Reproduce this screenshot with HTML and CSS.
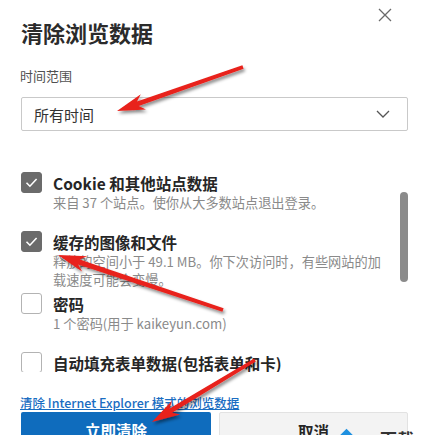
FILE: index.html
```html
<!DOCTYPE html>
<html lang="zh-CN">
<head>
<meta charset="utf-8">
<title>清除浏览数据</title>
<link rel="stylesheet" href="styles.css">
</head>
<body>
<div class="dialog">
  <div class="header">
    <h1 class="title">清除浏览数据</h1>
    <span class="close">
      <svg width="14" height="14" viewBox="0 0 14 14"><path d="M1 1 L13 13 M13 1 L1 13" stroke="#6a6a6a" stroke-width="1.3" fill="none"/></svg>
    </span>
  </div>
  <div class="label">时间范围</div>
  <div class="select">
    <span class="select-text">所有时间</span>
    <svg class="chevron" width="14" height="8" viewBox="0 0 14 8"><path d="M1 1 L7 7 L13 1" stroke="#555" stroke-width="1.3" fill="none"/></svg>
  </div>
  <div class="scroll">
    <div class="item">
      <span class="box checked"><svg width="21" height="21" viewBox="0 0 21 21"><path d="M5.5 10.8 L8.9 14.2 L15.6 7" stroke="#fff" stroke-width="1.6" fill="none"/></svg></span>
      <div class="text">
        <div class="item-title">Cookie 和其他站点数据</div>
        <div class="item-sub">来自 37 个站点。使你从大多数站点退出登录。</div>
      </div>
    </div>
    <div class="item tall">
      <span class="box checked"><svg width="21" height="21" viewBox="0 0 21 21"><path d="M5.5 10.8 L8.9 14.2 L15.6 7" stroke="#fff" stroke-width="1.6" fill="none"/></svg></span>
      <div class="text">
        <div class="item-title">缓存的图像和文件</div>
        <div class="item-sub">释放的空间小于 49.1 MB。你下次访问时，有些网站的加<br>载速度可能会变慢。</div>
      </div>
    </div>
    <div class="item">
      <span class="box"></span>
      <div class="text">
        <div class="item-title">密码</div>
        <div class="item-sub">1 个密码(用于 kaikeyun.com)</div>
      </div>
    </div>
    <div class="item">
      <span class="box"></span>
      <div class="text">
        <div class="item-title">自动填充表单数据(包括表单和卡)</div>
      </div>
    </div>
    <div class="thumb"></div>
  </div>
  <a class="link" href="#">清除 Internet Explorer 模式的浏览数据</a>
  <div class="buttons">
    <div class="btn primary">立即清除</div>
    <div class="btn secondary">取消</div>
  </div>
</div>
<div class="peek">
  <span class="diamond"></span>
  <span class="peek-text">下载</span>
</div>
<svg class="arrows" width="434" height="435" viewBox="0 0 434 435">
  <defs>
    <filter id="sh" x="-20%" y="-20%" width="140%" height="140%">
      <feDropShadow dx="1.5" dy="2.5" stdDeviation="1.6" flood-color="#000" flood-opacity="0.45"/>
    </filter>
  </defs>
  <g fill="#e8201a" filter="url(#sh)">
    <polygon points="242.4,65.3 137.0,101.4 140.8,94.2 117,111 146.0,109.4 138.6,106.1 243.6,68.7"/>
    <polygon points="223.6,308.3 79.7,259.6 87.1,256.3 58,255 82.1,271.5 78.1,264.4 222.4,311.7"/>
    <polygon points="254.1,358.5 169.6,408.5 171.9,400.7 152,422 180.1,414.4 172.1,412.8 255.9,361.5"/>
  </g>
</svg>
</body>
</html>
```

FILE: styles.css
```css
html, body {
  margin: 0;
  padding: 0;
  background: #fff;
}
body {
  width: 434px;
  height: 435px;
  overflow: hidden;
  position: relative;
  font-family: "Noto Sans CJK SC", "Noto Sans", sans-serif;
  color: #262626;
}
.dialog {
  padding: 0 26px 0 21px;
  display: flex;
  flex-direction: column;
}
.header {
  display: flex;
  justify-content: space-between;
  align-items: flex-start;
  padding-top: 17px;
}
.title {
  margin: 0;
  font-size: 22px;
  line-height: 30px;
  font-weight: 600;
  color: #2b2b2b;
}
.close {
  margin-top: -9px;
  margin-right: 16px;
  width: 14px;
  height: 14px;
  display: block;
}
.close svg { display: block; }
.label {
  margin-top: 20px;
  font-size: 13px;
  line-height: 18px;
  color: #505050;
  margin-left: -1px;
}
.select {
  margin-top: 12px;
  height: 34px;
  box-sizing: border-box;
  border: 1px solid #c9c9c9;
  border-radius: 2px;
  display: flex;
  align-items: center;
  justify-content: space-between;
  padding: 0 17px 0 12px;
}
.select-text {
  font-size: 15px;
  color: #333;
}
.chevron { display: block; }
.scroll {
  margin-top: 14px;
  height: 227px;
  box-sizing: border-box;
  padding-top: 27px;
  overflow: hidden;
  position: relative;
}
.item {
  display: flex;
  gap: 11px;
  height: 59px;
  flex-shrink: 0;
}
.item.tall { height: 62px; }
.box {
  width: 21px;
  height: 21px;
  box-sizing: border-box;
  border: 1px solid #b3b3b3;
  border-radius: 3px;
  flex-shrink: 0;
  display: block;
  background: #fff;
}
.box.checked {
  background: #6b6b6b;
  border-color: #6b6b6b;
}
.box svg {
  display: block;
  margin: -1px;
}
.text { display: flex; flex-direction: column; }
.item-title {
  font-size: 15.5px;
  line-height: 22px;
  font-weight: 600;
  color: #262626;
  white-space: nowrap;
}
.item-sub {
  font-size: 13.2px;
  line-height: 18px;
  color: #8a8a8a;
  white-space: nowrap;
}
.thumb {
  position: absolute;
  right: 0;
  top: 47px;
  width: 8px;
  height: 90px;
  border-radius: 4px;
  background: #8b8b8b;
}
.link {
  margin-top: 22px;
  margin-left: -1px;
  font-size: 12.5px;
  line-height: 18px;
  font-weight: 500;
  color: #1a6dc2;
  text-decoration: underline;
  align-self: flex-start;
}
.buttons {
  display: flex;
  gap: 8px;
}
.btn {
  height: 40px;
  box-sizing: border-box;
  padding-top: 7px;
  text-align: center;
  font-size: 15.5px;
  line-height: 22px;
  font-weight: 600;
  border-radius: 2px;
}
.primary {
  width: 190px;
  background: #0f6cbd;
  color: #fff;
}
.secondary {
  width: 189px;
  background: #f3f3f3;
  border: 1px solid #e2e2e2;
  color: #262626;
}
.peek {
  position: absolute;
  left: 338px;
  top: 429px;
  display: flex;
  align-items: flex-start;
  gap: 28px;
}
.diamond {
  width: 11px;
  height: 11px;
  margin-left: 3px;
  margin-top: 2px;
  background: #1e90e0;
  transform: rotate(45deg);
  display: block;
}
.peek-text {
  font-size: 17px;
  line-height: 20px;
  color: #333;
  font-weight: 600;
}
.arrows {
  position: absolute;
  left: 0;
  top: 0;
  pointer-events: none;
}
```
